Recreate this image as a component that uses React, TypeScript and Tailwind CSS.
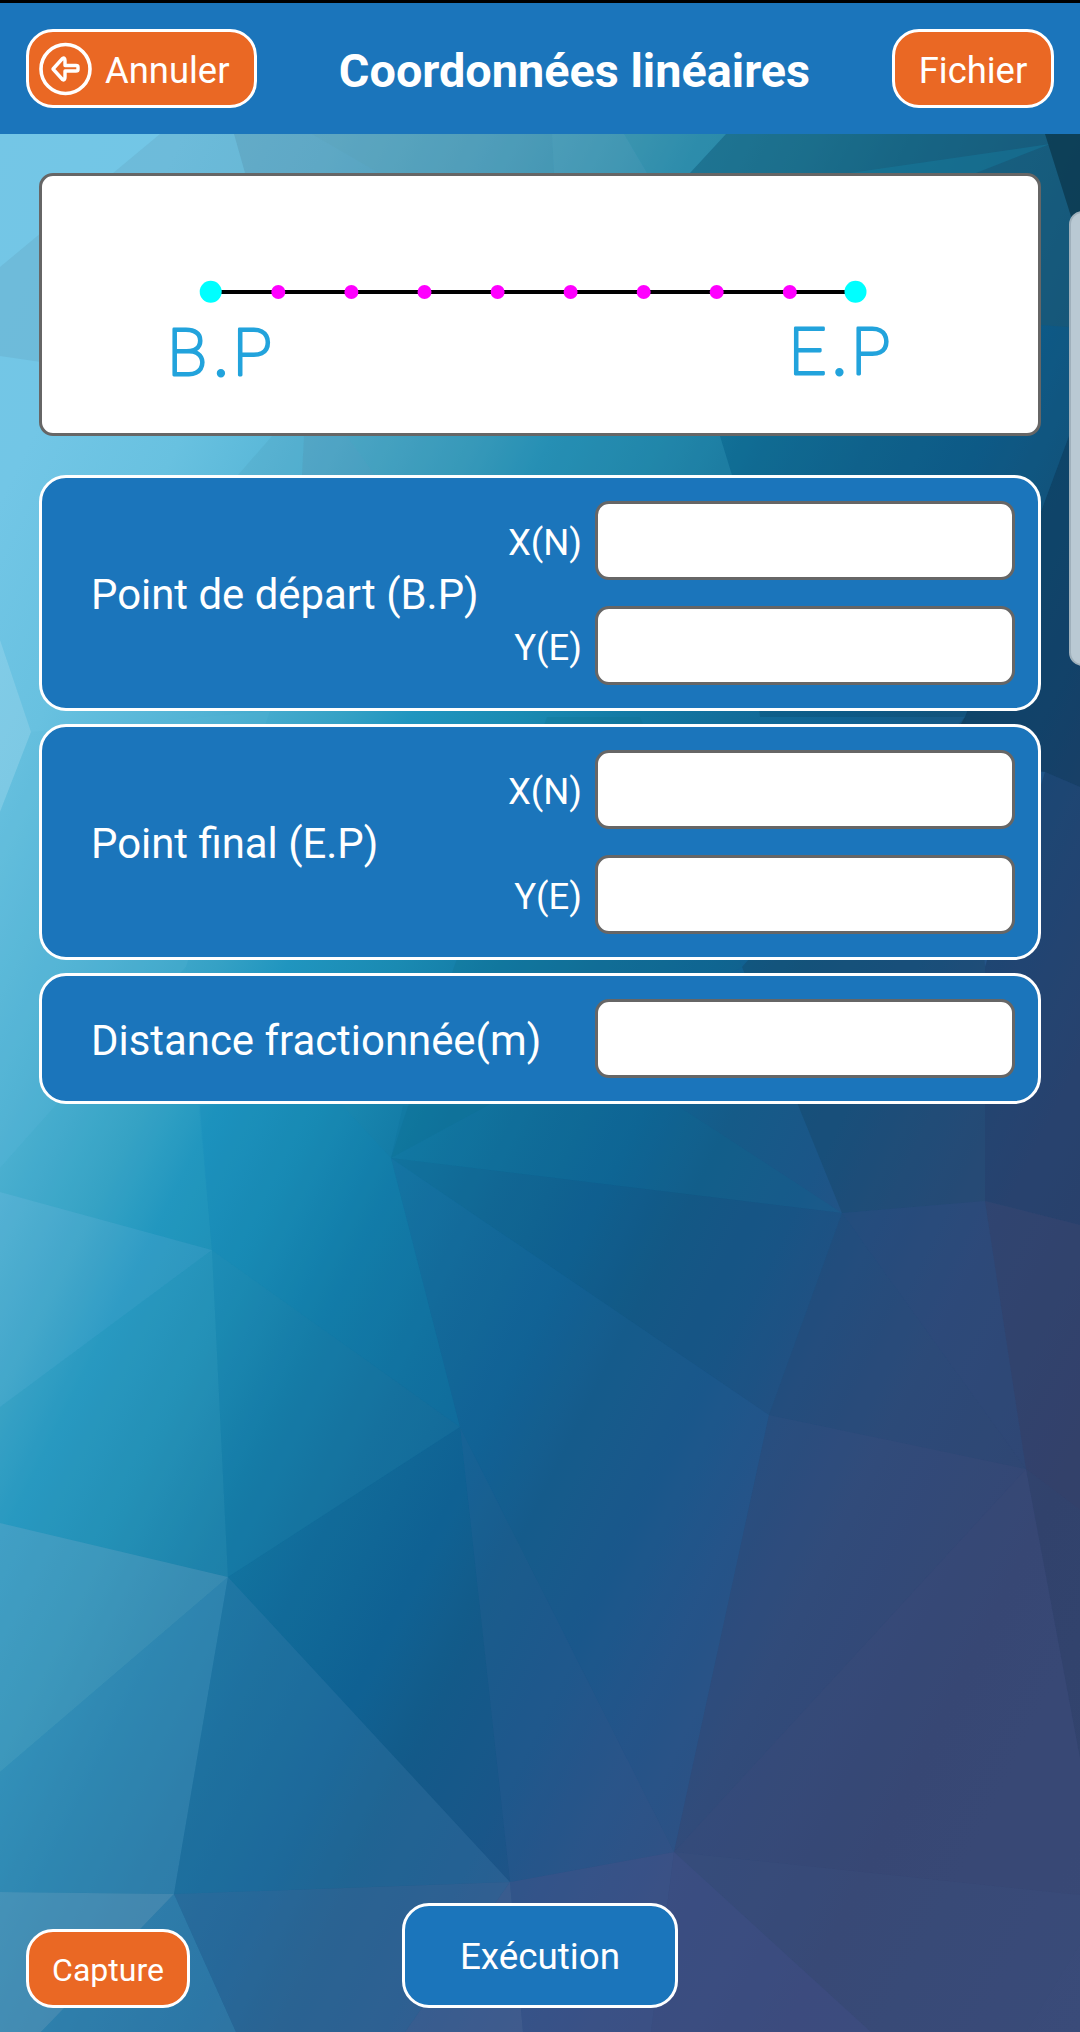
import React from "react";

// t = x + y / 2, from 0 to 2096 over the whole screen
const STOPS: [number, string][] = [
    [67, "#74c6e6"],
    [250, "#72c6e6"],
    [400, "#68c1e0"],
    [560, "#51b2d4"],
    [700, "#35a1c5"],
    [770, "#2095bf"],
    [880, "#1a8ab2"],
    [980, "#137aa5"],
    [1090, "#126d9a"],
    [1200, "#106394"],
    [1290, "#155b88"],
    [1400, "#1b5688"],
    [1490, "#275285"],
    [1610, "#334e7f"],
    [1800, "#374876"],
    [2096, "#3a4b79"],
];

// points, fill, opacity
const FACETS: [string, string, number][] = [
    ["160,134 0,267 0,356 300,400 245,173 234,134", "#5a93a8", 0.2],
    ["234,134 245,173 300,430 560,430 554,173 552,134", "#4a6f88", 0.3],
    ["312,134 379,173 600,300 554,173 552,134", "#5aa0a8", 0.12],
    ["552,134 554,173 600,300 647,173 624,134", "#5a8494", 0.36],
    ["624,134 647,173 690,173 726,134", "#41808f", 0.4],
    ["726,134 690,173 800,420 1040,325 1080,328 1080,134", "#1e4a5a", 0.44],
    ["1050,144 850,173 976,173", "#148bb0", 0.3],
    ["1045,134 1069,210 1080,245 1080,134", "#02202c", 0.45],
    ["272,436 238,475 302,475 304,436", "#3f86a0", 0.12],
    ["304,436 302,475 375,475 347,436", "#4a7c98", 0.26],
    ["347,436 375,475 732,475 720,436", "#3a7c92", 0.24],
    ["720,436 1040,325 1080,328 1069,436 965,717 760,717 732,475", "#064260", 0.26],
    ["1080,400 1069,436 965,717 940,760 1045,772 1080,787", "#021f33", 0.36],
    ["0,640 31,732 0,812", "#ffffff", 0.14],
    ["0,812 31,732 270,711 186,967 55,1106 0,1168", "#5ab8d8", 0.2],
    ["547,717 454,967 391,1158 742,967 640,717", "#0e6f88", 0.22],
    ["742,967 842,1213 985,1201 985,967 965,717", "#143f58", 0.3],
    ["985,967 1045,772 1080,787 1080,1225 985,1201", "#142f50", 0.35],
    ["0,1192 212,1250 0,1407", "#a0d4ec", 0.13],
    ["186,967 212,1250 0,1192 0,1168 55,1106", "#3fb0c8", 0.1],
    ["212,1250 228,1577 0,1523 0,1407", "#4aaac8", 0.2],
    ["0,1523 228,1577 0,1772", "#80b4d0", 0.34],
    ["228,1577 174,1894 0,1892 0,1772", "#5c9cc4", 0.38],
    ["0,1892 174,1894 41,2032 0,2032", "#84accc", 0.43],
    ["174,1894 236,2032 41,2032", "#5c98c4", 0.38],
    ["228,1577 510,1882 174,1894", "#3a7cac", 0.3],
    ["174,1894 510,1882 405,2032 236,2032", "#4c72a4", 0.38],
    ["510,1882 405,2032 523,2032", "#5a689c", 0.42],
    ["510,1882 523,2032 651,2032 674,1852", "#44568e", 0.42],
    ["212,1250 460,1427 228,1577", "#2888b4", 0.16],
    ["337,1100 391,1158 460,1427 212,1250 200,1106", "#0f86b8", 0.2],
    ["391,1158 403,1106 678,1106 842,1213", "#0a7098", 0.2],
    ["391,1158 842,1213 769,1415", "#0a4c78", 0.16],
    ["391,1158 769,1415 674,1852 460,1427", "#1a609a", 0.2],
    ["460,1427 510,1882 228,1577", "#0c5c94", 0.1],
    ["460,1427 674,1852 510,1882", "#2c5f9a", 0.22],
    ["842,1213 769,1415 1026,1469", "#1c4268", 0.28],
    ["842,1213 985,1201 1026,1469", "#244270", 0.36],
    ["985,1201 1080,1225 1080,1510 1026,1469", "#2c365a", 0.4],
    ["1026,1469 1080,1510 1080,1758", "#28385c", 0.35],
    ["769,1415 1026,1469 674,1852", "#30446c", 0.24],
    ["1026,1469 1080,1758 1080,1895 674,1852", "#384472", 0.3],
    ["674,1852 1080,1895 1080,1944 1026,2032 871,2032", "#3a4c78", 0.45],
    ["674,1852 871,2032 651,2032", "#404e84", 0.6],
];

const Backdrop = () => (
    <svg className="absolute inset-0 h-full w-full" viewBox="0 0 1080 2032" preserveAspectRatio="none" aria-hidden="true">
        <defs>
            <linearGradient id="sky" gradientUnits="userSpaceOnUse" x1="0" y1="0" x2="1677" y2="838">
                {STOPS.map(([t, color]) => (
                    <stop key={t} offset={t / 2096} stopColor={color} />
                ))}
            </linearGradient>
        </defs>
        <rect width="1080" height="2032" fill="url(#sky)" />
        {FACETS.map(([points, fill, opacity]) => (
            <polygon key={points} points={points} fill={fill} fillOpacity={opacity} />
        ))}
    </svg>
);

const BackIcon = () => (
    <svg className="h-[54px] w-[54px] shrink-0" viewBox="0 0 54 54" fill="none" stroke="#fff" strokeLinejoin="round">
        <circle cx="26.5" cy="27" r="24.5" strokeWidth="3.6" />
        <path d="M14 27 L23.5 16.5 Q26 15 26 18.5 V23.5 H37 Q39 23.5 39 25 V27.5 Q39 29 37 29 H26 V35 Q26 39 23.5 37.5 Z" strokeWidth="3.4" />
    </svg>
);

const DIVISIONS = [278.3, 351.4, 424.5, 497.6, 570.6, 643.7, 716.7, 789.8];

const LineDiagram = () => (
    <section className="h-[263px] rounded-[14px] border-[3px] border-[#666] bg-white">
        <svg className="block h-[257px] w-[996px]" viewBox="42 176 996 257">
            <line x1="211" y1="292" x2="856" y2="292" stroke="#000" strokeWidth="4" />
            {DIVISIONS.map((x) => (
                <circle key={x} cx={x} cy="292" r="7" fill="#f0f" />
            ))}
            <circle cx="210.7" cy="291.7" r="11" fill="#0ff" />
            <circle cx="855.5" cy="291.7" r="11" fill="#0ff" />
            <g fill="#22a3dc" stroke="#22a3dc" strokeWidth="2.8" strokeLinejoin="round" fontFamily="Roboto, sans-serif" fontWeight="100" fontSize="65">
                <text x="167.5 214.5 233" y="375">
                    B<tspan strokeWidth="4.8">.</tspan>P
                </text>
                <text x="789 833 851.5" y="374">
                    E<tspan strokeWidth="4.8">.</tspan>P
                </text>
            </g>
        </svg>
    </section>
);

const Field = ({ label }: { label?: string }) => (
    <label className="flex items-center justify-end gap-[13px] text-[36.5px] leading-none">
        {label && <span className="pt-[5px]">{label}</span>}
        <input className="h-[79px] w-[420px] rounded-[14px] border-[3px] border-[#666] bg-white px-4 text-black outline-none" />
    </label>
);

const Panel = ({ title, children }: { title: string; children: React.ReactNode }) => (
    <section className="flex items-center justify-between rounded-[27px] border-[3px] border-white bg-[#1b75bb] py-[23px] pr-[23px] pl-[49px]">
        <h2 className="w-0 pt-[4px] text-[41.9px] leading-none whitespace-nowrap">{title}</h2>
        <div className="flex flex-col gap-[26px]">{children}</div>
    </section>
);

export default function App() {
    return (
        <div className="relative isolate flex h-[2032px] w-[1080px] flex-col overflow-hidden bg-[#1b75bb] font-['Roboto',sans-serif] text-white">
            <div className="absolute inset-0 -z-10">
                <Backdrop />
            </div>

            <header className="flex h-[134px] shrink-0 items-start justify-between border-t-[3px] border-black bg-[#1b75bb] px-[26px] pt-[26px]">
                <button className="flex h-[79px] w-[231px] items-center gap-[12px] rounded-[27px] border-[3px] border-white bg-[#ea6824] pl-[10px] text-[36.4px] leading-none">
                    <BackIcon />
                    <span className="pt-[5px]">Annuler</span>
                </button>
                <h1 className="pt-[19px] text-[46.8px] leading-none font-bold">Coordonnées linéaires</h1>
                <button className="h-[79px] w-[162px] rounded-[27px] border-[3px] border-white bg-[#ea6824] pt-[5px] text-[36.4px] leading-none">Fichier</button>
            </header>

            <main className="flex flex-1 flex-col px-[39px] pt-[39px]">
                <LineDiagram />
                <div className="mt-[39px] flex flex-col gap-[13px]">
                    <Panel title="Point de départ (B.P)">
                        <Field label="X(N)" />
                        <Field label="Y(E)" />
                    </Panel>
                    <Panel title="Point final (E.P)">
                        <Field label="X(N)" />
                        <Field label="Y(E)" />
                    </Panel>
                    <Panel title="Distance fractionnée(m)">
                        <Field />
                    </Panel>
                </div>
            </main>

            <footer className="flex items-end px-[26px] pb-6">
                <button className="h-[79px] w-[164px] rounded-[27px] border-[3px] border-white bg-[#ea6824] pt-[2px] text-[32px] leading-none">Capture</button>
                <button className="ml-[212px] h-[105px] w-[276px] rounded-[27px] border-[3px] border-white bg-[#1b75bb] pt-[4px] text-[36.8px] leading-none">Exécution</button>
            </footer>

            {/* Edge panel handle */}
            <div className="absolute top-[211px] -right-4 h-[455px] w-[27px] rounded-[16px] border-2 border-[#9fb0bb] bg-[#b9c9d3]" />
        </div>
    );
}
